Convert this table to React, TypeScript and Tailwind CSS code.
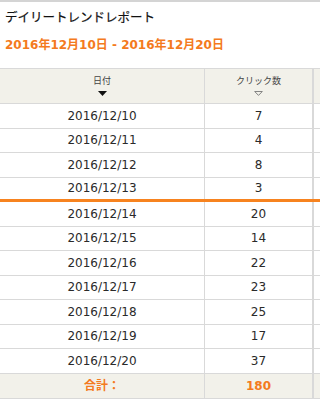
const rows: [string, number][] = [
  ["2016/12/10", 7],
  ["2016/12/11", 4],
  ["2016/12/12", 8],
  ["2016/12/13", 3],
  ["2016/12/14", 20],
  ["2016/12/15", 14],
  ["2016/12/16", 22],
  ["2016/12/17", 23],
  ["2016/12/18", 25],
  ["2016/12/19", 17],
  ["2016/12/20", 37],
];

const font = { fontFamily: '"DejaVu Sans", "Noto Sans CJK JP", sans-serif' };

export default function App() {
  return (
    <div className="w-[320px] h-[400px] overflow-hidden bg-white border-t-2 border-[#d4d4d4]" style={font}>
      <div className="pl-[5px] pt-[8px] h-[24px] text-[12.5px] leading-[16px] text-[#111] [-webkit-text-stroke:0.2px_#111]">デイリートレンドレポート</div>
      <div className="pl-[5px] pt-[11px] h-[30px] text-[12px] leading-[16px] font-bold text-[#f47a20]">
        2016年12月10日 - 2016年12月20日
      </div>
      <div className="mt-[12px] border-t border-[#d9d9d9]">
        <div className="flex h-[35px] bg-[#f2f1ea] border-b border-[#d9d9d9]">
          <div className="w-[205px] flex flex-col items-center pt-[6px] text-[9px] leading-[12px] text-[#444] border-r border-[#d9d9d9]">
            <span>日付</span>
            <svg width="9" height="5" viewBox="0 0 9 5" className="mt-[4px]">
              <path d="M0 0 H9 L4.5 5 Z" fill="#111" />
            </svg>
          </div>
          <div className="w-[109px] flex flex-col items-center pt-[6px] text-[9px] leading-[12px] text-[#444] border-r-2 border-[#d9d9d9]">
            <span>クリック数</span>
            <svg width="9" height="5" viewBox="0 0 9 5" className="mt-[4px]">
              <path d="M0.7 0.5 H8.3 L4.5 4.4 Z" fill="none" stroke="#777" strokeWidth="0.9" />
            </svg>
          </div>
          <div className="flex-1" />
        </div>
        {rows.map(([d, n], i) => (
          <div
            key={d}
            className={
              i === 3
                ? "flex h-[24.5px] border-b-[3px] border-[#f7831f] text-[12px] text-[#2a2a2a]"
                : "flex h-[24.5px] border-b border-[#d9d9d9] text-[12px] text-[#2a2a2a]"
            }
          >
            <div className="w-[205px] flex items-center justify-center border-r border-[#d9d9d9]">{d}</div>
            <div className="w-[109px] flex items-center justify-center border-r-2 border-[#d9d9d9]">{n}</div>
            <div className="flex-1" />
          </div>
        ))}
        <div className="flex h-[25px] bg-[#f2f1ea] border-b border-[#d9d9d9] text-[12px] font-bold text-[#f47a20]">
          <div className="w-[205px] flex items-center justify-center border-r border-[#d9d9d9]">合計：</div>
          <div className="w-[109px] flex items-center justify-center border-r-2 border-[#d9d9d9]">180</div>
          <div className="flex-1" />
        </div>
      </div>
    </div>
  );
}
